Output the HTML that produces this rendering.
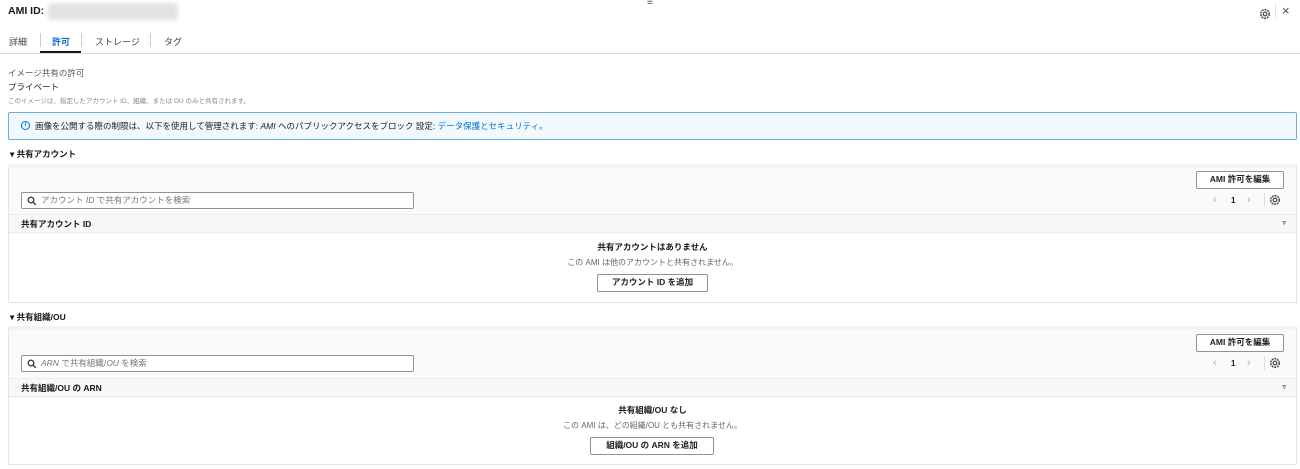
<!DOCTYPE html>
<html><head><meta charset="utf-8"><style>
*{box-sizing:border-box;margin:0;padding:0}
body{width:1300px;height:469px;background:#fff;font-family:"Liberation Sans","Noto Sans CJK JP",sans-serif;color:#16191f;position:relative;overflow:hidden;font-size:9px}
.a{position:absolute;white-space:nowrap}
.b{font-weight:bold}
.panel{position:absolute;left:8px;width:1289px;background:#fafafa;border:1px solid #e3e3e3;border-top:4px solid #f2f3f3}
.btn{position:absolute;border:1.5px solid #8d9499;background:#fff;border-radius:2px;font-weight:bold;font-size:8.5px;text-align:center;line-height:14px;color:#222}
.search{position:absolute;left:12px;width:393px;height:17px;border:1px solid #8d9499;background:#fff;border-radius:2px;font-size:8.5px;color:#777;line-height:15px;padding-left:19px}
.hdr{position:absolute;left:0;right:0;height:19px;border-top:1px solid #eaeded;border-bottom:1px solid #eaeded;background:#f8f8f8;font-weight:bold;font-size:8.5px;line-height:18px;padding-left:12px}
.body{position:absolute;left:0;right:0;bottom:0;background:#fff}
.c{position:absolute;left:0;right:0;text-align:center}
svg{position:absolute}
</style></head><body>
<svg width="0" height="0"><defs>
<symbol id="g" viewBox="0 0 12 12"><circle cx="6" cy="6" r="4.3" fill="none" stroke="#555" stroke-width="1.6" stroke-dasharray="2 0.8"/><circle cx="6" cy="6" r="1.8" fill="none" stroke="#555" stroke-width="1.3"/></symbol>
<symbol id="s" viewBox="0 0 10 10"><circle cx="4" cy="4" r="2.8" fill="none" stroke="#444" stroke-width="1.4"/><path d="M6 6L8.8 8.8" stroke="#444" stroke-width="1.5"/></symbol>
</defs></svg>
<div class="a b" style="left:8px;top:5px;font-size:10.5px">AMI ID:</div>
<div class="a" style="left:48px;top:3px;width:130px;height:17px;background:#e2e2e2;border-radius:3px;filter:blur(2px)"></div>
<div class="a" style="left:647px;top:-3px;font-size:10px;color:#555">≡</div>
<svg style="left:1259px;top:8px" width="12" height="12"><use href="#g"/></svg>
<div class="a" style="left:1275px;top:4px;width:1px;height:15px;background:#e3e3e3"></div>
<div class="a" style="left:1282px;top:3px;font-size:13px;color:#444">×</div>

<div class="a" style="left:9px;top:35px;font-size:9px;color:#444">詳細</div>
<div class="a" style="left:40px;top:33px;width:1px;height:14px;background:#ccc"></div>
<div class="a b" style="left:52px;top:35px;font-size:9px;color:#0972d3">許可</div>
<div class="a" style="left:40px;top:51px;width:41px;height:2px;background:#16191f"></div>
<div class="a" style="left:81px;top:33px;width:1px;height:14px;background:#ccc"></div>
<div class="a" style="left:95px;top:35px;font-size:9px;color:#444">ストレージ</div>
<div class="a" style="left:150px;top:33px;width:1px;height:14px;background:#ccc"></div>
<div class="a" style="left:164px;top:35px;font-size:9px;color:#444">タグ</div>
<div class="a" style="left:0;top:53px;width:1300px;height:1px;background:#d5dbdb"></div>

<div class="a" style="left:8px;top:67px;font-size:8.5px;color:#555">イメージ共有の許可</div>
<div class="a" style="left:8px;top:81px;font-size:8.5px;color:#222">プライベート</div>
<div class="a" style="left:8px;top:95px;font-size:6.5px;color:#888">このイメージは、指定したアカウント ID、組織、または OU のみと共有されます。</div>

<div class="a" style="left:8px;top:112px;width:1289px;height:28px;background:#f1f8fe;border:1px solid #6aaee0;border-radius:2px"></div>
<div class="a" style="left:21px;top:121px;width:9px;height:9px;border:1.5px solid #0972d3;border-radius:50%;font-size:6px;color:#0972d3;text-align:center;line-height:6px;font-weight:bold">i</div>
<div class="a" style="left:35px;top:120px;font-size:8.5px;color:#222">画像を公開する際の制限は、以下を使用して管理されます: <i>AMI</i> へのパブリックアクセスをブロック 設定: <span style="color:#0972d3">データ保護とセキュリティ。</span></div>

<div class="a b" style="left:10px;top:148px;font-size:8.5px">▾ 共有アカウント</div>
<div class="panel" style="top:164px;height:139px">
 <div class="btn" style="left:1187px;top:3px;width:88px;height:18px">AMI 許可を編集</div>
 <div class="search" style="top:24px"><svg style="left:5px;top:3px" width="10" height="10"><use href="#s"/></svg>アカウント <i>ID</i> で共有アカウントを検索</div>
 <div class="a" style="left:1204px;top:26px;font-size:11px;color:#aaa">‹</div>
 <div class="a b" style="left:1222px;top:28px;font-size:8px">1</div>
 <div class="a" style="left:1238px;top:26px;font-size:11px;color:#aaa">›</div>
 <div class="a" style="left:1255px;top:25px;width:1px;height:14px;background:#ddd"></div>
 <svg style="left:1260px;top:26px" width="12" height="12"><use href="#g"/></svg>
 <div class="hdr" style="top:46px">共有アカウント ID<span style="position:absolute;right:10px;color:#666;font-size:7px">▿</span></div>
 <div class="body" style="height:68px">
  <div class="c b" style="top:7px;font-size:8.5px">共有アカウントはありません</div>
  <div class="c" style="top:23px;font-size:8px;color:#666">この AMI は他のアカウントと共有されません。</div>
  <div class="btn" style="left:588px;top:40px;width:111px;height:18px">アカウント ID を追加</div>
 </div>
</div>

<div class="a b" style="left:10px;top:311px;font-size:8.5px">▾ 共有組織/OU</div>
<div class="panel" style="top:326px;height:139px">
 <div class="btn" style="left:1187px;top:4px;width:88px;height:18px">AMI 許可を編集</div>
 <div class="search" style="top:25px"><svg style="left:5px;top:3px" width="10" height="10"><use href="#s"/></svg><i>ARN</i> で共有組織/<i>OU</i> を検索</div>
 <div class="a" style="left:1204px;top:27px;font-size:11px;color:#aaa">‹</div>
 <div class="a b" style="left:1222px;top:29px;font-size:8px">1</div>
 <div class="a" style="left:1238px;top:27px;font-size:11px;color:#aaa">›</div>
 <div class="a" style="left:1255px;top:26px;width:1px;height:14px;background:#ddd"></div>
 <svg style="left:1260px;top:27px" width="12" height="12"><use href="#g"/></svg>
 <div class="hdr" style="top:48px">共有組織/OU の ARN<span style="position:absolute;right:10px;color:#666;font-size:7px">▿</span></div>
 <div class="body" style="height:66px">
  <div class="c b" style="top:6px;font-size:8.5px">共有組織/OU なし</div>
  <div class="c" style="top:22px;font-size:8px;color:#666">この AMI は、どの組織/OU とも共有されません。</div>
  <div class="btn" style="left:581px;top:39px;width:124px;height:18px">組織/OU の ARN を追加</div>
 </div>
</div>
</body></html>
